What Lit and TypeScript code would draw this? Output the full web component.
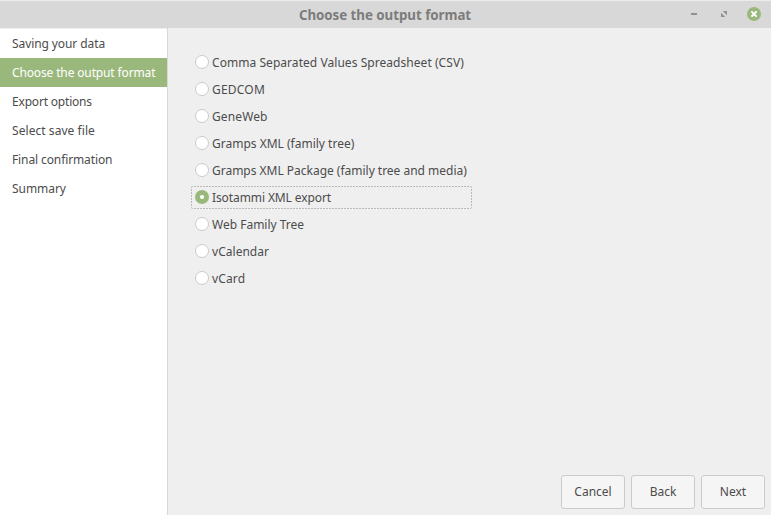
import { LitElement, html, css } from "lit";
import { customElement, state } from "lit/decorators.js";
import { classMap } from "lit/directives/class-map.js";
import { styleMap } from "lit/directives/style-map.js";

interface Item {
  label: string;
  tracking: number;
}

const STEPS: Item[] = [
  { label: "Saving your data", tracking: -0.09 },
  { label: "Choose the output format", tracking: -0.14 },
  { label: "Export options", tracking: -0.19 },
  { label: "Select save file", tracking: 0.06 },
  { label: "Final confirmation", tracking: -0.11 },
  { label: "Summary", tracking: -0.05 },
];

const FORMATS: Item[] = [
  { label: "Comma Separated Values Spreadsheet (CSV)", tracking: 0.05 },
  { label: "GEDCOM", tracking: 0.2 },
  { label: "GeneWeb", tracking: 0.12 },
  { label: "Gramps XML (family tree)", tracking: 0 },
  { label: "Gramps XML Package (family tree and media)", tracking: -0.015 },
  { label: "Isotammi XML export", tracking: -0.1 },
  { label: "Web Family Tree", tracking: 0 },
  { label: "vCalendar", tracking: 0.03 },
  { label: "vCard", tracking: 0.15 },
];

const tracked = (item: Item) =>
  html`<span style=${styleMap({ letterSpacing: `${item.tracking}px` })}>${item.label}</span>`;

@customElement("app-root")
export class AppRoot extends LitElement {
  @state() private selected = 5;

  static styles = css`
    :host {
      display: grid;
      grid-template-rows: 28px 1fr;
      height: 100vh;
      box-sizing: border-box;
      background: #efefef;
      color: #4c4c4c;
      font: 12px/18px "Noto Sans", sans-serif;
      overflow: hidden;
    }
    .titlebar {
      display: grid;
      grid-template-columns: 100px 1fr 100px;
      align-items: center;
      box-sizing: border-box;
      border-top: 1px solid #ececec;
      background: #d8d8d8;
    }
    .title {
      grid-column: 2;
      margin: 0;
      text-align: center;
      font-size: 13.33px;
      font-weight: 700;
      line-height: 20px;
      letter-spacing: -0.04px;
      color: #7c7c7c;
      padding: 1px 1px 0 0;
    }
    .controls {
      display: flex;
      justify-content: flex-end;
      gap: 16px;
      padding-right: 10px;
      margin-top: -1px;
    }
    .controls svg {
      display: block;
      width: 14px;
      height: 14px;
    }
    .body {
      display: grid;
      grid-template-columns: 168px 1fr;
      min-height: 0;
    }
    .steps {
      margin: 0;
      padding: 1px 0 0;
      list-style: none;
      background: linear-gradient(#efefef 1px, #fff 1px);
      border-right: 1px solid #d8d8d8;
    }
    .step {
      height: 29px;
      line-height: 29px;
      padding-left: 12px;
      white-space: nowrap;
    }
    .step.current {
      background: #9ab87c;
      color: #fff;
    }
    .content {
      display: flex;
      flex-direction: column;
      justify-content: space-between;
      padding: 23px 6px 6px 23px;
    }
    .formats {
      display: flex;
      flex-direction: column;
      gap: 4px;
      width: 281px;
    }
    .format {
      display: flex;
      align-items: center;
      gap: 3px;
      height: 23px;
      box-sizing: border-box;
      padding-left: 4px;
      white-space: nowrap;
    }
    .format.active {
      --across: repeating-linear-gradient(90deg, #bababa 0 2px, transparent 2px 3px);
      --down: repeating-linear-gradient(#bababa 0 2px, transparent 2px 3px);
      border-radius: 2px;
      background:
        var(--across) top / 100% 1px no-repeat,
        var(--across) bottom / 100% 1px no-repeat,
        var(--down) left / 1px 100% no-repeat,
        var(--down) right / 1px 100% no-repeat;
    }
    .radio {
      flex: none;
      width: 14px;
      height: 14px;
      overflow: visible;
      margin-bottom: 1px;
    }
    .actions {
      display: flex;
      justify-content: flex-end;
      gap: 6px;
    }
    .button {
      width: 64px;
      height: 34px;
      box-sizing: border-box;
      border: 1px solid #cbcbcb;
      border-radius: 3px;
      background: #f5f5f5;
      color: inherit;
      font: inherit;
      padding: 0;
    }
  `;

  private radio(on: boolean) {
    return on
      ? html`<svg class="radio" viewBox="0 0 14 14">
          <circle cx="7" cy="7" r="7" fill="#9ab87c" />
          <circle cx="7" cy="7" r="2.1" fill="#fff" />
        </svg>`
      : html`<svg class="radio" viewBox="0 0 14 14">
          <circle cx="7" cy="7" r="6.5" fill="#fff" stroke="#cbcbcb" />
        </svg>`;
  }

  render() {
    return html`
      <header class="titlebar">
        <h1 class="title">Choose the output format</h1>
        <div class="controls">
          <svg viewBox="0 0 14 14"><path d="M4 6h6v2H4z" fill="#919191" /></svg>
          <svg viewBox="0 0 14 14">
            <path d="M5.7 4H10v4.3zM4 5.7V10h4.3z" fill="#919191" />
          </svg>
          <svg viewBox="0 0 14 14">
            <circle cx="7" cy="7" r="7" fill="#9ab87c" />
            <path d="M4.4 4.4l5.2 5.2M9.6 4.4l-5.2 5.2" stroke="#fff" stroke-width="2" />
          </svg>
        </div>
      </header>
      <div class="body">
        <ul class="steps">
          ${STEPS.map(
            (s, i) => html`<li class=${classMap({ step: true, current: i === 1 })}>${tracked(s)}</li>`
          )}
        </ul>
        <main class="content">
          <div class="formats">
            ${FORMATS.map(
              (f, i) => html`<label
                class=${classMap({ format: true, active: i === this.selected })}
                @click=${() => (this.selected = i)}
                >${this.radio(i === this.selected)}${tracked(f)}</label
              >`
            )}
          </div>
          <div class="actions">
            ${["Cancel", "Back", "Next"].map((b) => html`<button class="button">${b}</button>`)}
          </div>
        </main>
      </div>
    `;
  }
}
